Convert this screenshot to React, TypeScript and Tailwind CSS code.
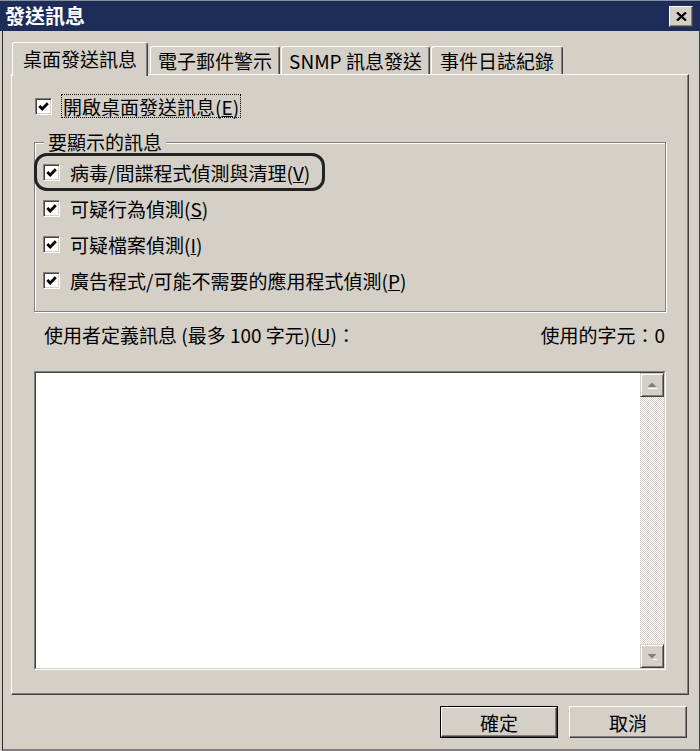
import React from "react";

const FONT = "font-['Noto_Sans_CJK_TC','Noto_Sans_CJK_SC',sans-serif]";

function Check() {
  return (
    <span className="w-[17px] h-[17px] shrink-0 bg-white border border-t-[#808080] border-l-[#808080] border-r-white border-b-white shadow-[inset_1px_1px_0_#404040,inset_-1px_-1px_0_#d4d0c8] flex items-center justify-center">
      <svg width="11" height="11" viewBox="0 0 11 11">
        <path d="M1.3 5 L4.2 8 L9.8 2.2" stroke="#000" strokeWidth="2.8" fill="none" />
      </svg>
    </span>
  );
}

function Tab({ label, w, active }: { label: string; w: string; active?: boolean }) {
  if (active) {
    return (
      <div
        className={`relative z-10 -mb-[2px] h-[34px] ${w} bg-[#d4d0c8] border-t border-l border-t-white border-l-white border-r border-r-[#404040] shadow-[inset_-1px_0_0_#808080] rounded-tl-[3px] rounded-tr-[3px] flex items-center justify-center pb-[3px] text-[19px] leading-none`}
      >
        {label}
      </div>
    );
  }
  return (
    <div
      className={`h-[28px] ${w} bg-[#d4d0c8] border-t border-l border-t-white border-l-white border-r border-r-[#404040] shadow-[inset_-1px_0_0_#808080] rounded-tl-[3px] rounded-tr-[3px] flex items-center justify-center text-[19px] leading-none`}
    >
      {label}
    </div>
  );
}

function Row({ text, k, rest }: { text: string; k: string; rest?: string }) {
  return (
    <div className="flex items-center h-[36px]">
      <Check />
      <span className="ml-[10px] text-[19px] leading-none whitespace-nowrap">
        {text}(<u>{k}</u>){rest}
      </span>
    </div>
  );
}

function ScrollBtn({ up }: { up?: boolean }) {
  return (
    <div className="h-[24px] w-[24px] shrink-0 bg-[#d4d0c8] border border-t-[#d4d0c8] border-l-[#d4d0c8] border-r-[#404040] border-b-[#404040] shadow-[inset_1px_1px_0_#fff,inset_-1px_-1px_0_#808080] flex items-center justify-center">
      <svg width="11" height="7" viewBox="0 0 11 7">
        {up ? (
          <>
            <polygon points="5,0.5 9.5,5 0.5,5" fill="#808080" />
            <line x1="1" y1="6.5" x2="10" y2="6.5" stroke="#fff" strokeWidth="1" />
          </>
        ) : (
          <>
            <polygon points="0.5,1 9.5,1 5,5.5" fill="#808080" />
            <line x1="6" y1="6.5" x2="10" y2="6.5" stroke="#fff" strokeWidth="1" />
          </>
        )}
      </svg>
    </div>
  );
}

export default function App() {
  return (
    <div className={`w-[700px] h-[751px] bg-[#d4d0c8] flex flex-col overflow-hidden text-black ${FONT}`}>
      {/* Title bar */}
      <div className="h-[31px] shrink-0 bg-[#1e2c5a] border-t border-t-[#8a8f9c] flex items-center justify-between pl-[5px] pr-[7px]">
        <span className="text-white text-[20px] font-bold leading-none tracking-[0px]">發送訊息</span>
        <div className="w-[24px] h-[21px] bg-[#d4d0c8] border border-t-white border-l-white border-r-[#404040] border-b-[#404040] shadow-[inset_-1px_-1px_0_#808080] flex items-center justify-center">
          <svg width="11" height="9" viewBox="0 0 11 9">
            <path d="M1 0.5 L10 8.5 M10 0.5 L1 8.5" stroke="#000" strokeWidth="2.3" fill="none" />
          </svg>
        </div>
      </div>

      {/* Body */}
      <div className="flex-1 flex pl-[2px]">
        <div className="flex-1 flex flex-col border-l border-l-[#2b2525] border-r border-r-[#404040] border-b-2 border-b-[#808080] pl-[8px] pt-[11px]">
          {/* Tabs */}
          <div className="h-[32px] flex items-end pl-[1px] shrink-0">
            <Tab label="桌面發送訊息" w="w-[136px]" active />
            <div className="ml-[2px]">
              <Tab label="電子郵件警示" w="w-[130px]" />
            </div>
            <div className="ml-[1px]">
              <Tab label="SNMP 訊息發送" w="w-[149px]" />
            </div>
            <div className="ml-[1px]">
              <Tab label="事件日誌紀錄" w="w-[132px]" />
            </div>
          </div>

          {/* Panel */}
          <div className="w-[678px] h-[621px] shrink-0 bg-[#d4d0c8] border-t border-l border-t-white border-l-white border-r border-b border-r-[#404040] border-b-[#404040] shadow-[inset_-1px_-1px_0_#808080] flex flex-col">
            {/* Main checkbox */}
            <div className="mt-[19px] ml-[23px] flex items-center h-[24px]">
              <Check />
              <span className="ml-[9px] h-[24px] border border-dotted border-black px-[1px] flex items-center text-[19px] leading-none whitespace-nowrap">
                開啟桌面發送訊息(<u>E</u>)
              </span>
            </div>

            {/* Group box */}
            <div className="relative mt-[24px] ml-[22px] w-[632px] h-[170px] shrink-0 border border-[#808080] shadow-[inset_1px_1px_0_#ffffff,1px_1px_0_#ffffff] pt-[11px] pl-[8px]">
              <span className="absolute left-[9px] -top-[13px] bg-[#d4d0c8] px-[4px] text-[19px] leading-[24px] whitespace-nowrap">
                要顯示的訊息
              </span>
              <Row text="病毒/間諜程式偵測與清理" k="V" />
              <Row text="可疑行為偵測" k="S" />
              <Row text="可疑檔案偵測" k="I" />
              <Row text="廣告程式/可能不需要的應用程式偵測" k="P" />
              <div className="absolute left-[-1px] top-[10px] w-[291px] h-[38px] border-[3px] border-[#222222] rounded-[13px] pointer-events-none" />
            </div>

            {/* Label row */}
            <div className="mt-[10px] ml-[32px] mr-[23px] h-[24px] flex items-center justify-between text-[19px] leading-none whitespace-nowrap">
              <span>
                使用者定義訊息 (最多 100 字元)(<u>U</u>)：
              </span>
              <span>使用的字元：0</span>
            </div>

            {/* Text area */}
            <div className="mt-[25px] ml-[22px] w-[632px] h-[299px] shrink-0 border border-t-[#808080] border-l-[#808080] border-r-white border-b-white">
              <div className="w-full h-full border border-t-[#404040] border-l-[#404040] border-r-[#d4d0c8] border-b-[#d4d0c8] flex">
                <div className="flex-1 bg-white" />
                <div className="w-[24px] flex flex-col">
                  <ScrollBtn up />
                  <div className="flex-1 bg-[image:repeating-conic-gradient(#d4d0c8_0%_25%,#ffffff_0%_50%)] bg-[length:2px_2px]" />
                  <ScrollBtn />
                </div>
              </div>
            </div>
          </div>

          {/* Buttons */}
          <div className="mt-[11px] w-[676px] flex justify-end gap-[11px]">
            <div className="w-[118px] h-[32px] border border-black">
              <div className="w-full h-full border border-t-white border-l-white border-r-[#404040] border-b-[#404040] shadow-[inset_-1px_-1px_0_#808080] flex items-center justify-center text-[19px] leading-none">
                確定
              </div>
            </div>
            <div className="w-[118px] h-[32px] border border-t-white border-l-white border-r-[#404040] border-b-[#404040] shadow-[inset_-1px_-1px_0_#808080] flex items-center justify-center text-[19px] leading-none">
              取消
            </div>
          </div>
        </div>
      </div>
    </div>
  );
}
